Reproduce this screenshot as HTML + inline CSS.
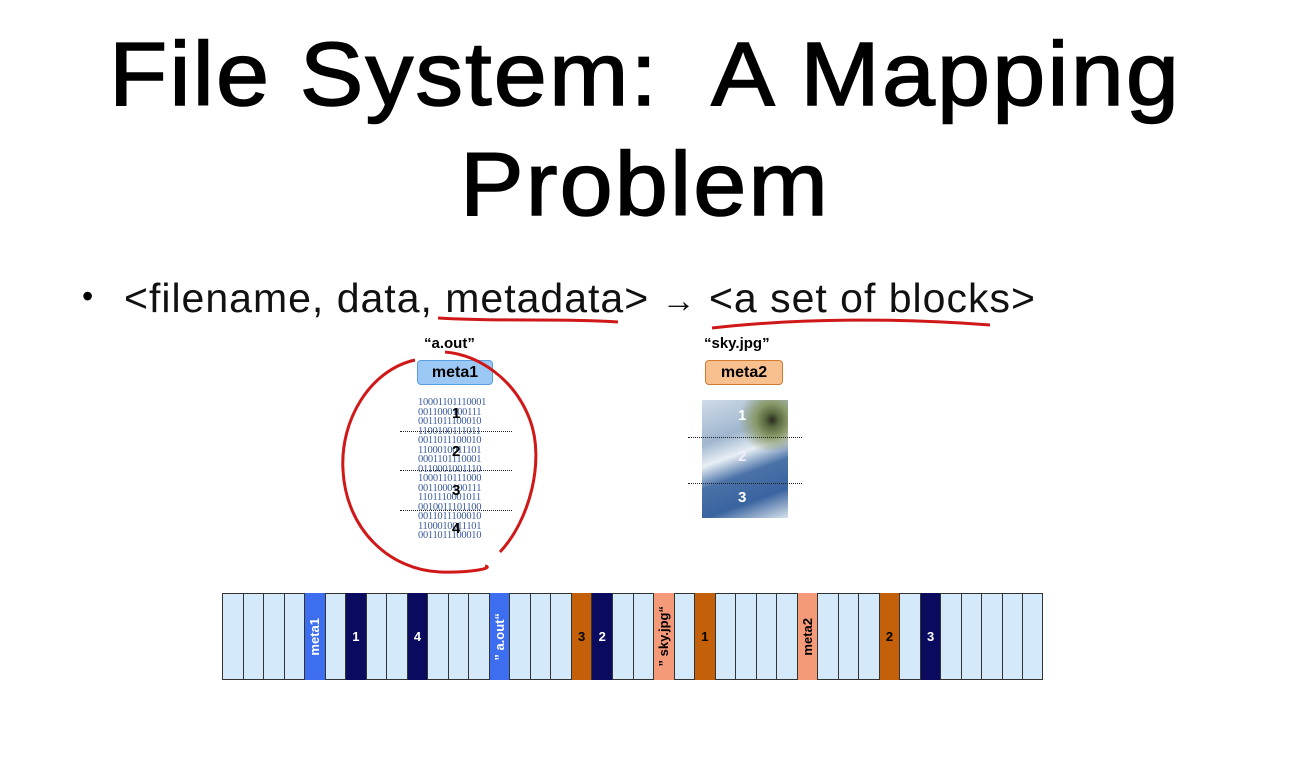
<!DOCTYPE html>
<html><head><style>
body{margin:0;width:1290px;height:760px;background:#fff;overflow:hidden;position:relative;font-family:"Liberation Sans",sans-serif}
.t{position:absolute;left:0;width:1290px;text-align:center;font-size:90px;color:#000;line-height:1;-webkit-text-stroke:1.5px #000;letter-spacing:2px;transform:scaleX(1.06);transform-origin:center}
.abs{position:absolute}
.cell{position:absolute;top:593px;height:87px;border-left:1px solid #333;box-sizing:border-box;color:#fff;font-weight:bold;font-size:13px;display:flex;align-items:center;justify-content:center}
.v{writing-mode:vertical-rl;transform:rotate(180deg);white-space:nowrap}
.bin{position:absolute;left:418px;width:76px;font-family:"Liberation Serif",serif;font-size:10.5px;line-height:9.5px;color:#3a5aa0;overflow:hidden;white-space:nowrap;letter-spacing:-0.3px}
.num{position:absolute;font-weight:bold;font-size:15px}
.dot{position:absolute;border-top:1px dotted #222;height:0}
</style></head><body>
<div class="t" style="top:30px">File System:&nbsp; A Mapping</div>
<div class="t" style="top:140px">Problem</div>
<div class="abs" style="left:82px;top:278px;font-size:32px">•</div>
<div class="abs" style="left:124px;top:275px;font-size:41px;letter-spacing:1px;color:#111;white-space:nowrap">&lt;filename, data, metadata&gt; <b style="font-size:34px">→</b> &lt;a set of blocks&gt;</div>
<div class="abs" style="left:424px;top:335px;font-size:15px;font-weight:bold">“a.out”</div>
<div class="abs" style="left:704px;top:335px;font-size:15px;font-weight:bold">“sky.jpg”</div>
<div class="abs" style="left:417px;top:360px;width:76px;height:25px;background:#9cc8f5;border:1px solid #5a9ee0;border-radius:4px;box-sizing:border-box;text-align:center;font-weight:bold;font-size:16px;line-height:23px">meta1</div>
<div class="abs" style="left:705px;top:360px;width:78px;height:25px;background:#f9c08f;border:1px solid #d07a30;border-radius:4px;box-sizing:border-box;text-align:center;font-weight:bold;font-size:16px;line-height:23px">meta2</div>
<div class="bin" style="top:398px">10001101110001<br>0011000100111<br>0011011100010<br>1100100111011<br>0011011100010<br>1100010011101<br>0001101110001<br>0110001001110<br>1000110111000<br>0011000100111<br>1101110001011<br>0010011101100<br>0011011100010<br>1100010011101<br>0011011100010</div>
<div class="num" style="left:452px;top:405px">1</div>
<div class="num" style="left:452px;top:443px">2</div>
<div class="num" style="left:452px;top:482px">3</div>
<div class="num" style="left:452px;top:520px">4</div>
<div class="dot" style="left:400px;top:431px;width:112px"></div>
<div class="dot" style="left:400px;top:470px;width:112px"></div>
<div class="dot" style="left:400px;top:510px;width:112px"></div>
<div class="abs" style="left:702px;top:400px;width:86px;height:118px;background:linear-gradient(160deg,#cfdbe8 0%,#9fb6cf 30%,#e8eef4 45%,#4a72a8 60%,#3a64a0 80%,#d8e2ec 100%)"></div>
<div class="abs" style="left:735px;top:400px;width:53px;height:50px;background:radial-gradient(circle at 70% 40%,#2a2a20 0,#5a6a40 15%,#8a9a6a 35%,rgba(150,160,120,0) 70%)"></div>
<div class="num" style="left:738px;top:407px;color:#fff">1</div>
<div class="num" style="left:738px;top:448px;color:#eef">2</div>
<div class="num" style="left:738px;top:489px;color:#fff">3</div>
<div class="dot" style="left:688px;top:437px;width:114px"></div>
<div class="dot" style="left:688px;top:483px;width:114px"></div>
<svg class="abs" style="left:0;top:0" width="1290" height="760">
<path d="M415 360 C370 370 340 420 343 470 C346 530 390 570 440 572 C470 573 495 568 485 566 M500 552 C530 520 545 460 530 420 C515 380 480 355 445 352" fill="none" stroke="#d01818" stroke-width="3"/>
<path d="M438 318 C500 322 560 318 618 322" fill="none" stroke="#d01818" stroke-width="3"/>
<path d="M712 328 C800 318 900 318 990 325" fill="none" stroke="#d01818" stroke-width="3"/>
</svg>
<div class="abs" style="left:222px;top:593px;width:821px;height:87px;background:#d4eafb;border:1px solid #333;box-sizing:border-box"></div>
<div id="cells"></div>
<script>
var m={4:['#3d6ef0','meta1',1],6:['#0a0a5e','1'],9:['#0a0a5e','4'],13:['#3d6ef0','” a.out“',1],17:['#c4600a','3',0,'#000'],18:['#0a0a5e','2'],21:['#f59a78','” sky.jpg“',1,'#000'],23:['#c4600a','1',0,'#000'],28:['#f59a78','meta2',1,'#000'],32:['#c4600a','2',0,'#000'],34:['#0a0a5e','3']};
var h='';for(var i=1;i<40;i++){var x=222+i*20.525;h+='<div class="cell" style="left:'+x+'px;width:1px;background:#333"></div>';}
for(var k in m){var x=222+k*20.525,d=m[k];h+='<div class="cell" style="left:'+x+'px;width:20.5px;background:'+d[0]+';color:'+(d[3]||'#fff')+'"><span class="'+(d[2]?'v':'')+'">'+d[1]+'</span></div>';}
document.getElementById('cells').innerHTML=h;
</script>
</body></html>
